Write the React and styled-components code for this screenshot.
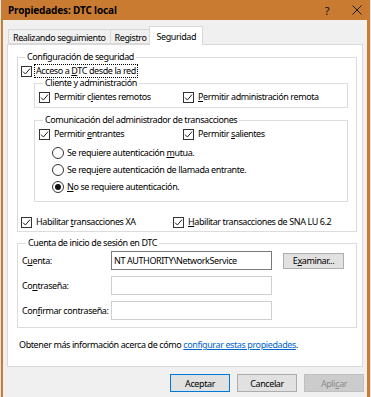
import React from "react";
import styled, { createGlobalStyle } from "styled-components";

const Global = createGlobalStyle`
  body {
    margin: 0;
    background: #e4e4e4;
    font-family: "Noto Sans", "Liberation Sans", sans-serif;
    font-size: 9px;
    letter-spacing: -0.4px;
    color: #000;
  }
`;

const Window = styled.div`
  width: 369px;
  height: 397px;
  margin-left: 1px;
  padding: 0 3px 0 2px;
  box-sizing: border-box;
  background: #c97b32;
  overflow: hidden;
  display: flex;
  flex-direction: column;
`;

const TitleBar = styled.div`
  height: 20px;
  flex: none;
  display: flex;
  align-items: center;
  padding-left: 5px;
`;

const Title = styled.div`
  flex: 1;
  font-size: 10px;
  font-weight: 700;
  letter-spacing: -0.15px;
`;

const TitleButton = styled.div`
  width: ${(p) => p.$w}px;
  margin-right: ${(p) => p.$mr || 0}px;
  height: 20px;
  display: flex;
  align-items: center;
  justify-content: center;
  font-size: 11px;
  color: #111;
`;

const Client = styled.div`
  flex: 1;
  background: #f0f0f0;
  padding: 6px 4px 0 4px;
`;

const TabStrip = styled.div`
  display: flex;
  align-items: flex-end;
  height: 18px;
  padding-left: 1px;
  position: relative;
  z-index: 1;
`;

const Tab = styled.div`
  height: ${(p) => (p.$active ? 19 : 15)}px;
  box-sizing: border-box;
  padding: ${(p) => (p.$active ? 0 : 1)}px ${(p) => (p.$active ? 6 : 4)}px 0;
  margin: 0 ${(p) => (p.$active ? -2 : 0)}px ${(p) => (p.$active ? -1 : 0)}px;
  margin-left: ${(p) => (p.$active ? -2 : -1)}px;
  border: 1px solid #d9d9d9;
  border-bottom: ${(p) => (p.$active ? "none" : "1px solid #d9d9d9")};
  background: ${(p) => (p.$active ? "#fff" : "#f0f0f0")};
  display: flex;
  align-items: center;
  &:first-child {
    margin-left: 0;
  }
`;

const Panel = styled.div`
  height: 323px;
  box-sizing: border-box;
  background: #fff;
  border: 1px solid #d9d9d9;
  padding: 0 5px 0 9px;
`;

const Group = styled.fieldset`
  margin: ${(p) => p.$mt || 0}px ${(p) => p.$mr || 0}px 0 ${(p) => p.$ml || 0}px;
  padding: ${(p) => p.$pt || 0}px 0 ${(p) => p.$pb || 0}px ${(p) => p.$pl || 0}px;
  border: 1px solid #dcdcdc;
  min-width: 0;
  display: flex;
  flex-direction: column;
  legend {
    padding: 0 2px;
    margin-left: 4px;
    line-height: 12px;
    height: 12px;
  }
`;

const Row = styled.div`
  display: flex;
  align-items: center;
  height: 12px;
  margin-top: ${(p) => p.$mt || 0}px;
`;

const Cell = styled.div`
  display: flex;
  align-items: center;
  width: ${(p) => (p.$w ? `${p.$w}px` : "auto")};
`;

const Box = styled.span`
  width: 11px;
  height: 11px;
  box-sizing: border-box;
  border: 1px solid #333;
  background: #fff;
  flex: none;
  display: flex;
  align-items: center;
  justify-content: center;
  margin-right: 3px;
`;

const Label = styled.span`
  line-height: 12px;
  white-space: nowrap;
  outline: ${(p) => (p.$focus ? "1px dotted #000" : "none")};
  padding: 0 1px;
`;

const Radio = styled.span`
  width: 12px;
  height: 12px;
  box-sizing: border-box;
  border: 1px solid #333;
  border-radius: 50%;
  background: #fff;
  flex: none;
  display: flex;
  align-items: center;
  justify-content: center;
  margin-right: 2px;
  &::after {
    content: "";
    width: 6px;
    height: 6px;
    border-radius: 50%;
    background: ${(p) => (p.$on ? "#111" : "transparent")};
  }
`;

const RadioList = styled.div`
  display: flex;
  flex-direction: column;
  gap: 5px;
  margin: 7px 0 0 13px;
`;

const Check = ({ children, focus }) => (
  <>
    <Box>
      <svg width="9" height="9" viewBox="0 0 9 9">
        <path d="M1 4.6 L3.4 7 L8 1.6" fill="none" stroke="#222" strokeWidth="1" />
      </svg>
    </Box>
    <Label $focus={focus}>{children}</Label>
  </>
);

const AccountGrid = styled.div`
  display: grid;
  grid-template-columns: 89px 161px 72px;
  row-gap: 6px;
  align-items: center;
  margin-top: 2px;
  span {
    white-space: nowrap;
  }
`;

const Field = styled.div`
  height: 19px;
  box-sizing: border-box;
  border: 1px solid ${(p) => (p.$dark ? "#7a7a7a" : "#cfcfcf")};
  background: #fff;
  padding-left: 2px;
  line-height: 17px;
  white-space: nowrap;
  overflow: hidden;
`;

const Button = styled.div`
  height: ${(p) => p.$h || 18}px;
  width: ${(p) => p.$w || 60}px;
  box-sizing: border-box;
  justify-self: end;
  border: 1px solid ${(p) => (p.$default ? "#0078d7" : p.$disabled ? "#bfbfbf" : "#adadad")};
  background: ${(p) => (p.$disabled ? "#cccccc" : "#e1e1e1")};
  color: ${(p) => (p.$disabled ? "#8d8d8d" : "#000")};
  display: flex;
  align-items: center;
  justify-content: center;
  white-space: nowrap;
`;

const Info = styled.div`
  margin: 11px 0 0 2px;
  line-height: 12px;
  white-space: nowrap;
  a {
    color: #0066cc;
    text-decoration: underline;
  }
`;

const ButtonRow = styled.div`
  display: flex;
  justify-content: flex-end;
  gap: 7px;
  margin: 7px -1px 0 0;
`;

export default function App() {
  return (
    <>
      <Global />
      <Window>
        <TitleBar>
          <Title>Propiedades: DTC local</Title>
          <TitleButton $w={18} $mr={11}>?</TitleButton>
          <TitleButton $w={20}>
            <svg width="10" height="10" viewBox="0 0 10 10">
              <path d="M0.5 0.5 L9.5 9.5 M9.5 0.5 L0.5 9.5" stroke="#1a1a1a" strokeWidth="1" />
            </svg>
          </TitleButton>
        </TitleBar>
        <Client>
          <TabStrip>
            <Tab>Realizando seguimiento</Tab>
            <Tab>Registro</Tab>
            <Tab $active>Seguridad</Tab>
          </TabStrip>
          <Panel>
            <Group $mt={6} $pt={2} $pb={3} $pl={3}>
              <legend>Configuración de seguridad</legend>
              <Row>
                <Check focus>
                  Acceso a <u>D</u>TC desde la red
                </Check>
              </Row>
              <Group $ml={13} $mr={8} $pt={2} $pb={4} $pl={4}>
                <legend>Cliente y administración</legend>
                <Row>
                  <Cell $w={144}>
                    <Check>
                      Permitir c<u>l</u>ientes remotos
                    </Check>
                  </Cell>
                  <Cell>
                    <Check>
                      <u>P</u>ermitir administración remota
                    </Check>
                  </Cell>
                </Row>
              </Group>
              <Group $mt={6} $ml={13} $mr={8} $pt={2} $pb={8} $pl={4}>
                <legend>Comunicación del administrador de transacciones</legend>
                <Row>
                  <Cell $w={144}>
                    <Check>
                      Permitir <u>e</u>ntrantes
                    </Check>
                  </Cell>
                  <Cell>
                    <Check>
                      Permitir <u>s</u>alientes
                    </Check>
                  </Cell>
                </Row>
                <RadioList>
                  <Row>
                    <Radio />
                    <Label>
                      Se requiere autenticación <u>m</u>utua.
                    </Label>
                  </Row>
                  <Row>
                    <Radio />
                    <Label>
                      Se requ<u>i</u>ere autenticación de llamada entrante.
                    </Label>
                  </Row>
                  <Row>
                    <Radio $on />
                    <Label>
                      <u>N</u>o se requiere autenticación.
                    </Label>
                  </Row>
                </RadioList>
              </Group>
              <Row $mt={14}>
                <Cell $w={152}>
                  <Check>
                    Habilitar <u>t</u>ransacciones XA
                  </Check>
                </Cell>
                <Cell>
                  <Check>
                    <u>H</u>abilitar transacciones de SNA LU 6.2
                  </Check>
                </Cell>
              </Row>
            </Group>
            <Group $mt={5} $pt={0} $pb={7} $pl={4}>
              <legend>Cuenta de inicio de sesión en DTC</legend>
              <AccountGrid>
                <span>
                  C<u>u</u>enta:
                </span>
                <Field $dark>NT AUTHORITY\NetworkService</Field>
                <Button $w={61} $h={16}>
                  E<u>x</u>aminar...
                </Button>
                <span>
                  Co<u>n</u>traseña:
                </span>
                <Field />
                <span />
                <span>
                  Con<u>f</u>irmar contraseña:
                </span>
                <Field />
                <span />
              </AccountGrid>
            </Group>
            <Info>
              Obtener más información acerca de cómo <a>configurar estas propiedades</a>.
            </Info>
          </Panel>
          <ButtonRow>
            <Button $default>Aceptar</Button>
            <Button>Cancelar</Button>
            <Button $disabled>
              Apli<u>c</u>ar
            </Button>
          </ButtonRow>
        </Client>
      </Window>
    </>
  );
}
